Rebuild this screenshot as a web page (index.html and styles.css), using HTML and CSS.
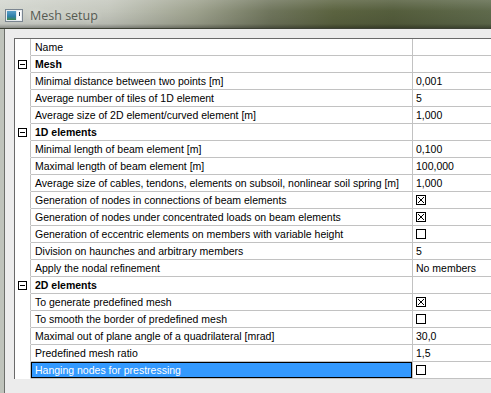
FILE: index.html
```html
<!DOCTYPE html>
<html lang="en">
<head>
  <meta charset="UTF-8" />
  <title>Mesh setup</title>
  <link rel="stylesheet" href="styles.css">
</head>
<body>

  <div class="titlebar">
    <svg class="app-icon" width="18" height="13" viewBox="0 0 18 13">
      <defs>
        <linearGradient id="pic" x1="0" y1="0" x2="0" y2="1">
          <stop offset="0" stop-color="#5aa0c8"/>
          <stop offset="0.6" stop-color="#2f7fa8"/>
          <stop offset="1" stop-color="#3f8a50"/>
        </linearGradient>
      </defs>
      <rect x="0.5" y="0.5" width="17" height="12" fill="#e8ecef" stroke="#7a8590"/>
      <rect x="2" y="2" width="9" height="9" fill="url(#pic)"/>
      <rect x="12" y="2" width="4" height="9" fill="#ffffff"/>
      <rect x="14" y="3" width="1" height="4" fill="#2c3e50"/>
    </svg>
    <span class="title">Mesh setup</span>
  </div>

  <div class="frame">
    <div class="client">
      <table class="grid">
        <colgroup>
          <col class="c-exp"><col class="c-name"><col class="c-val">
        </colgroup>
        <tr class="head"><td class="exp"></td><td class="name">Name</td><td class="val"></td></tr>

        <!-- Mesh -->
        <tr class="group"><td class="exp"><span class="toggle"></span></td><td class="name">Mesh</td><td class="val"></td></tr>
        <tr><td class="exp"></td><td class="name">Minimal distance between two points [m]</td><td class="val">0,001</td></tr>
        <tr><td class="exp"></td><td class="name">Average number of tiles of 1D element</td><td class="val">5</td></tr>
        <tr><td class="exp"></td><td class="name">Average size of 2D element/curved element [m]</td><td class="val">1,000</td></tr>

        <!-- 1D elements -->
        <tr class="group"><td class="exp"><span class="toggle"></span></td><td class="name">1D elements</td><td class="val"></td></tr>
        <tr><td class="exp"></td><td class="name">Minimal length of beam element [m]</td><td class="val">0,100</td></tr>
        <tr><td class="exp"></td><td class="name">Maximal length of beam element [m]</td><td class="val">100,000</td></tr>
        <tr><td class="exp"></td><td class="name">Average size of cables, tendons, elements on subsoil, nonlinear soil spring [m]</td><td class="val">1,000</td></tr>
        <tr><td class="exp"></td><td class="name">Generation of nodes in connections of beam elements</td><td class="val"><span class="check on"></span></td></tr>
        <tr><td class="exp"></td><td class="name">Generation of nodes under concentrated loads on beam elements</td><td class="val"><span class="check on"></span></td></tr>
        <tr><td class="exp"></td><td class="name">Generation of eccentric elements on members with variable height</td><td class="val"><span class="check"></span></td></tr>
        <tr><td class="exp"></td><td class="name">Division on haunches and arbitrary members</td><td class="val">5</td></tr>
        <tr><td class="exp"></td><td class="name">Apply the nodal refinement</td><td class="val">No members</td></tr>

        <!-- 2D elements -->
        <tr class="group"><td class="exp"><span class="toggle"></span></td><td class="name">2D elements</td><td class="val"></td></tr>
        <tr><td class="exp"></td><td class="name">To generate predefined mesh</td><td class="val"><span class="check on"></span></td></tr>
        <tr><td class="exp"></td><td class="name">To smooth the border of predefined mesh</td><td class="val"><span class="check"></span></td></tr>
        <tr><td class="exp"></td><td class="name">Maximal out of plane angle of a quadrilateral [mrad]</td><td class="val">30,0</td></tr>
        <tr><td class="exp"></td><td class="name">Predefined mesh ratio</td><td class="val">1,5</td></tr>
        <tr class="selected"><td class="exp"></td><td class="name">Hanging nodes for prestressing</td><td class="val"><span class="check"></span></td></tr>
      </table>
    </div>
  </div>

</body>
</html>
```

FILE: styles.css
```css
html, body {
  margin: 0;
  padding: 0;
  width: 491px;
  height: 393px;
  overflow: hidden;
  background: #c9ccc4;
}

body {
  display: flex;
  flex-direction: column;
}

/* Aero style caption */
.titlebar {
  height: 29px;
  flex: none;
  display: flex;
  align-items: center;
  gap: 7px;
  padding-left: 5px;
  padding-top: 2px;
  box-sizing: border-box;
  background:
    linear-gradient(to bottom, rgba(255,255,255,0.15) 0, rgba(0,0,0,0) 40%, rgba(0,0,0,0.08) 85%, rgba(0,0,0,0.35) 100%),
    linear-gradient(to right, #d3d6cf 0, #c4c7bd 22%, #9da18d 40%, #6f755c 55%, #5b6340 68%, #545d3c 80%, #5f6a4c 100%);
  border-bottom: 1px solid #3c4034;
}

.app-icon {
  display: block;
}

.title {
  font-family: "Open Sans", "Liberation Sans", sans-serif;
  font-size: 12.5px;
  color: #555a52;
  text-shadow: 0 0 6px rgba(255,255,255,0.7);
}

.frame {
  flex: 1;
  min-height: 0;
  padding-left: 4px;
  background: linear-gradient(to right, #bfc3bb, #d2d5cf);
}

.client {
  height: 100%;
  overflow: hidden;
  background: #ececec;
  border-left: 1px solid #6c6e6a;
  padding: 9px 0 0 9px;
  box-sizing: border-box;
}

/* property grid */
.grid {
  border-collapse: separate;
  border-spacing: 0;
  table-layout: fixed;
  width: 560px;
  background: #fff;
  border-top: 1px solid #6a6a6a;
  border-left: 1px solid #6a6a6a;
  font-family: "Liberation Sans", Arial, sans-serif;
  font-size: 10.5px;
  color: #000;
}

.c-exp { width: 16px; }
.c-name { width: 382px; }
.c-val { width: 162px; }

.grid td {
  height: 16px;
  padding: 0;
  line-height: 16px;
  white-space: nowrap;
  overflow: hidden;
  border-right: 1px solid #c2c2c2;
  border-bottom: 1px solid #c2c2c2;
}

.grid td.exp {
  border-bottom-color: #fff;
}

.grid td.name { padding-left: 4px; }
.grid td.val { padding-left: 3px; }

.group td.name {
  font-weight: bold;
}

.toggle {
  display: block;
  width: 7px;
  height: 7px;
  margin: 0 0 0 3px;
  border: 1px solid #000;
  background: #fff;
  position: relative;
}

.toggle::after {
  content: "";
  position: absolute;
  left: 1px;
  top: 3px;
  width: 5px;
  height: 1px;
  background: #000;
}

.check {
  display: inline-block;
  vertical-align: -1px;
  width: 8px;
  height: 8px;
  border: 1px solid #000;
  background: #fff;
}

.check.on {
  background:
    linear-gradient(45deg, transparent calc(50% - 0.7px), #000 calc(50% - 0.7px), #000 calc(50% + 0.7px), transparent calc(50% + 0.7px)),
    linear-gradient(-45deg, transparent calc(50% - 0.7px), #000 calc(50% - 0.7px), #000 calc(50% + 0.7px), transparent calc(50% + 0.7px)),
    #fff;
  background-size: 6px 6px;
  background-repeat: no-repeat;
  background-position: 1px 1px;
}

.selected td.name {
  background: #3399ff;
  color: #fff;
  box-shadow: inset 0 0 0 1px #000;
}
```
